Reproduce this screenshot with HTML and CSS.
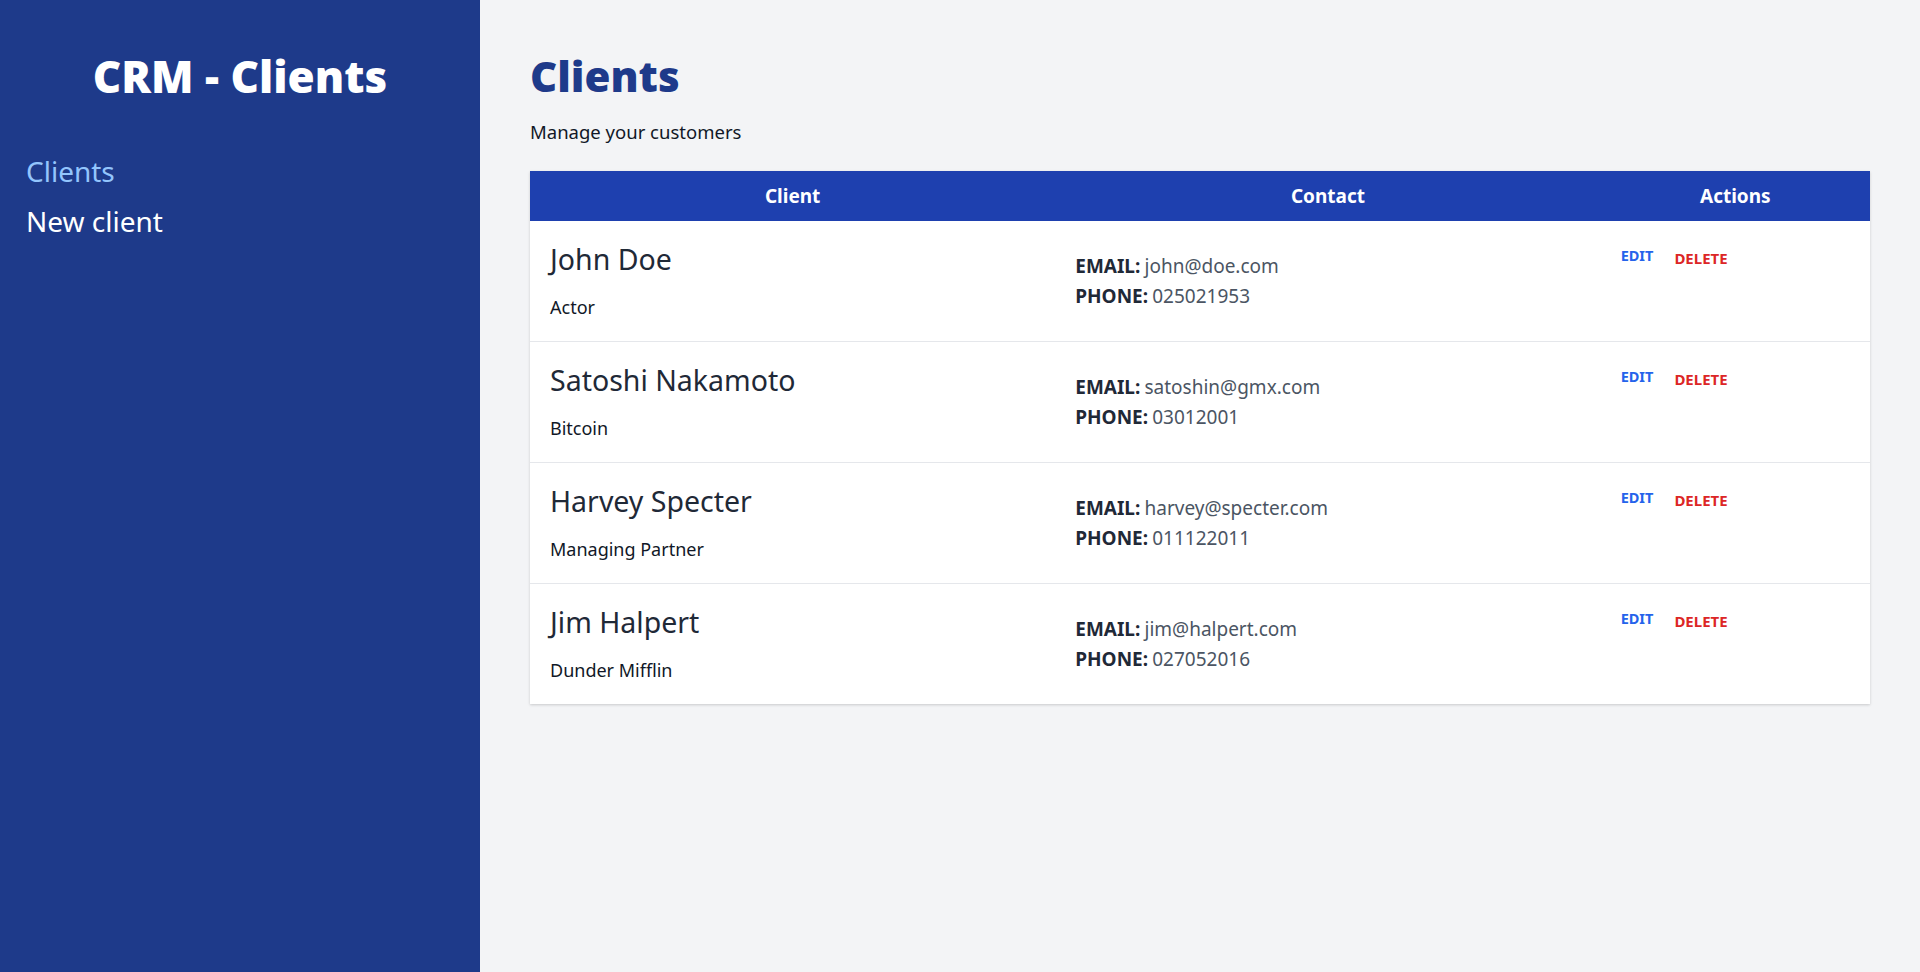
FILE: index.html
```html
<!DOCTYPE html>
<html lang="en">
<head>
    <meta charset="UTF-8">
    <meta name="viewport" content="width=device-width, initial-scale=1.0">
    <title>CRM - Clients</title>
    <link rel="stylesheet" href="styles.css">
</head>
<body>
    <aside class="sidebar">
        <h1 class="brand">CRM - Clients</h1>
        <nav class="nav">
            <a href="#" class="nav-link active">Clients</a>
            <a href="#" class="nav-link">New client</a>
        </nav>
    </aside>

    <main class="content">
        <h2 class="page-title">Clients</h2>
        <p class="page-subtitle">Manage your customers</p>

        <table class="clients-table">
            <thead>
                <tr>
                    <th class="col-client">Client</th>
                    <th class="col-contact">Contact</th>
                    <th class="col-actions">Actions</th>
                </tr>
            </thead>
            <tbody>
                <tr>
                    <td>
                        <div class="client-name">John Doe</div>
                        <div class="client-company">Actor</div>
                    </td>
                    <td>
                        <div><span class="label">EMAIL:</span> <span class="value">john@doe.com</span></div>
                        <div><span class="label">PHONE:</span> <span class="value">025021953</span></div>
                    </td>
                    <td class="actions-cell">
                        <div class="actions">
                            <a href="#" class="edit-link">Edit</a>
                            <button class="delete-btn">Delete</button>
                        </div>
                    </td>
                </tr>
                <tr>
                    <td>
                        <div class="client-name">Satoshi Nakamoto</div>
                        <div class="client-company">Bitcoin</div>
                    </td>
                    <td>
                        <div><span class="label">EMAIL:</span> <span class="value">satoshin@gmx.com</span></div>
                        <div><span class="label">PHONE:</span> <span class="value">03012001</span></div>
                    </td>
                    <td class="actions-cell">
                        <div class="actions">
                            <a href="#" class="edit-link">Edit</a>
                            <button class="delete-btn">Delete</button>
                        </div>
                    </td>
                </tr>
                <tr>
                    <td>
                        <div class="client-name">Harvey Specter</div>
                        <div class="client-company">Managing Partner</div>
                    </td>
                    <td>
                        <div><span class="label">EMAIL:</span> <span class="value">harvey@specter.com</span></div>
                        <div><span class="label">PHONE:</span> <span class="value">011122011</span></div>
                    </td>
                    <td class="actions-cell">
                        <div class="actions">
                            <a href="#" class="edit-link">Edit</a>
                            <button class="delete-btn">Delete</button>
                        </div>
                    </td>
                </tr>
                <tr>
                    <td>
                        <div class="client-name">Jim Halpert</div>
                        <div class="client-company">Dunder Mifflin</div>
                    </td>
                    <td>
                        <div><span class="label">EMAIL:</span> <span class="value">jim@halpert.com</span></div>
                        <div><span class="label">PHONE:</span> <span class="value">027052016</span></div>
                    </td>
                    <td class="actions-cell">
                        <div class="actions">
                            <a href="#" class="edit-link">Edit</a>
                            <button class="delete-btn">Delete</button>
                        </div>
                    </td>
                </tr>
            </tbody>
        </table>
    </main>
</body>
</html>
```

FILE: styles.css
```css
* {
    box-sizing: border-box;
}

body {
    margin: 0;
    display: flex;
    min-height: 100vh;
    background-color: #f3f4f6;
    font-family: "Noto Sans", "Open Sans", sans-serif;
    color: #111827;
}

/* sidebar */
.sidebar {
    width: 480px;
    flex-shrink: 0;
    background-color: #1e3a8a;
    padding: 0 26px;
}

.brand {
    margin: 50px 0 50px;
    text-align: center;
    color: #fff;
    font-size: 44px;
    font-weight: 900;
    line-height: 1.2;
}

.nav {
    display: flex;
    flex-direction: column;
    gap: 14px;
}

.nav-link {
    color: #fff;
    font-size: 28px;
    line-height: 36px;
    text-decoration: none;
}

.nav-link.active {
    color: #93c5fd;
}

/* main area */
.content {
    flex: 1;
    padding: 50px;
}

.page-title {
    margin: 0;
    color: #1e3a8a;
    font-size: 42px;
    font-weight: 900;
    line-height: 52px;
}

.page-subtitle {
    margin: 16px 0 25px;
    font-size: 18.5px;
    line-height: 28px;
}

.clients-table {
    width: 100%;
    border-collapse: collapse;
    background-color: #fff;
    box-shadow: 0 1px 3px rgba(0, 0, 0, 0.12), 0 1px 2px rgba(0, 0, 0, 0.06);
}

.clients-table th {
    height: 50px;
    background-color: #1e40af;
    color: #fff;
    font-size: 19px;
    font-weight: 700;
    text-align: center;
}

.col-client { width: 39.2%; }
.col-contact { width: 40.7%; }
.col-actions { width: 20.1%; }

.clients-table td {
    padding: 20px;
    vertical-align: middle;
    border-bottom: 1px solid #e5e7eb;
}

.clients-table tr:last-child td {
    border-bottom: none;
}

.client-name {
    color: #1f2937;
    font-size: 28.5px;
    line-height: 36px;
}

.client-company {
    margin-top: 16px;
    font-size: 18px;
    line-height: 28px;
}

.label {
    color: #1f2937;
    font-weight: 700;
    font-size: 19px;
    line-height: 30px;
}

.value {
    color: #4b5563;
    font-size: 19px;
    line-height: 30px;
}

.actions-cell {
    vertical-align: top !important;
}

.actions {
    display: flex;
    align-items: flex-start;
    gap: 21px;
}

.edit-link {
    padding-top: 4px;
    color: #2563eb;
    font-size: 14.5px;
    font-weight: 700;
    line-height: 20px;
    text-transform: uppercase;
    text-decoration: none;
}

.delete-btn {
    margin: 0;
    padding: 7px 0 0;
    border: none;
    background: none;
    color: #dc2626;
    font-family: inherit;
    font-size: 15px;
    font-weight: 700;
    line-height: 20px;
    text-transform: uppercase;
    cursor: pointer;
}
```
